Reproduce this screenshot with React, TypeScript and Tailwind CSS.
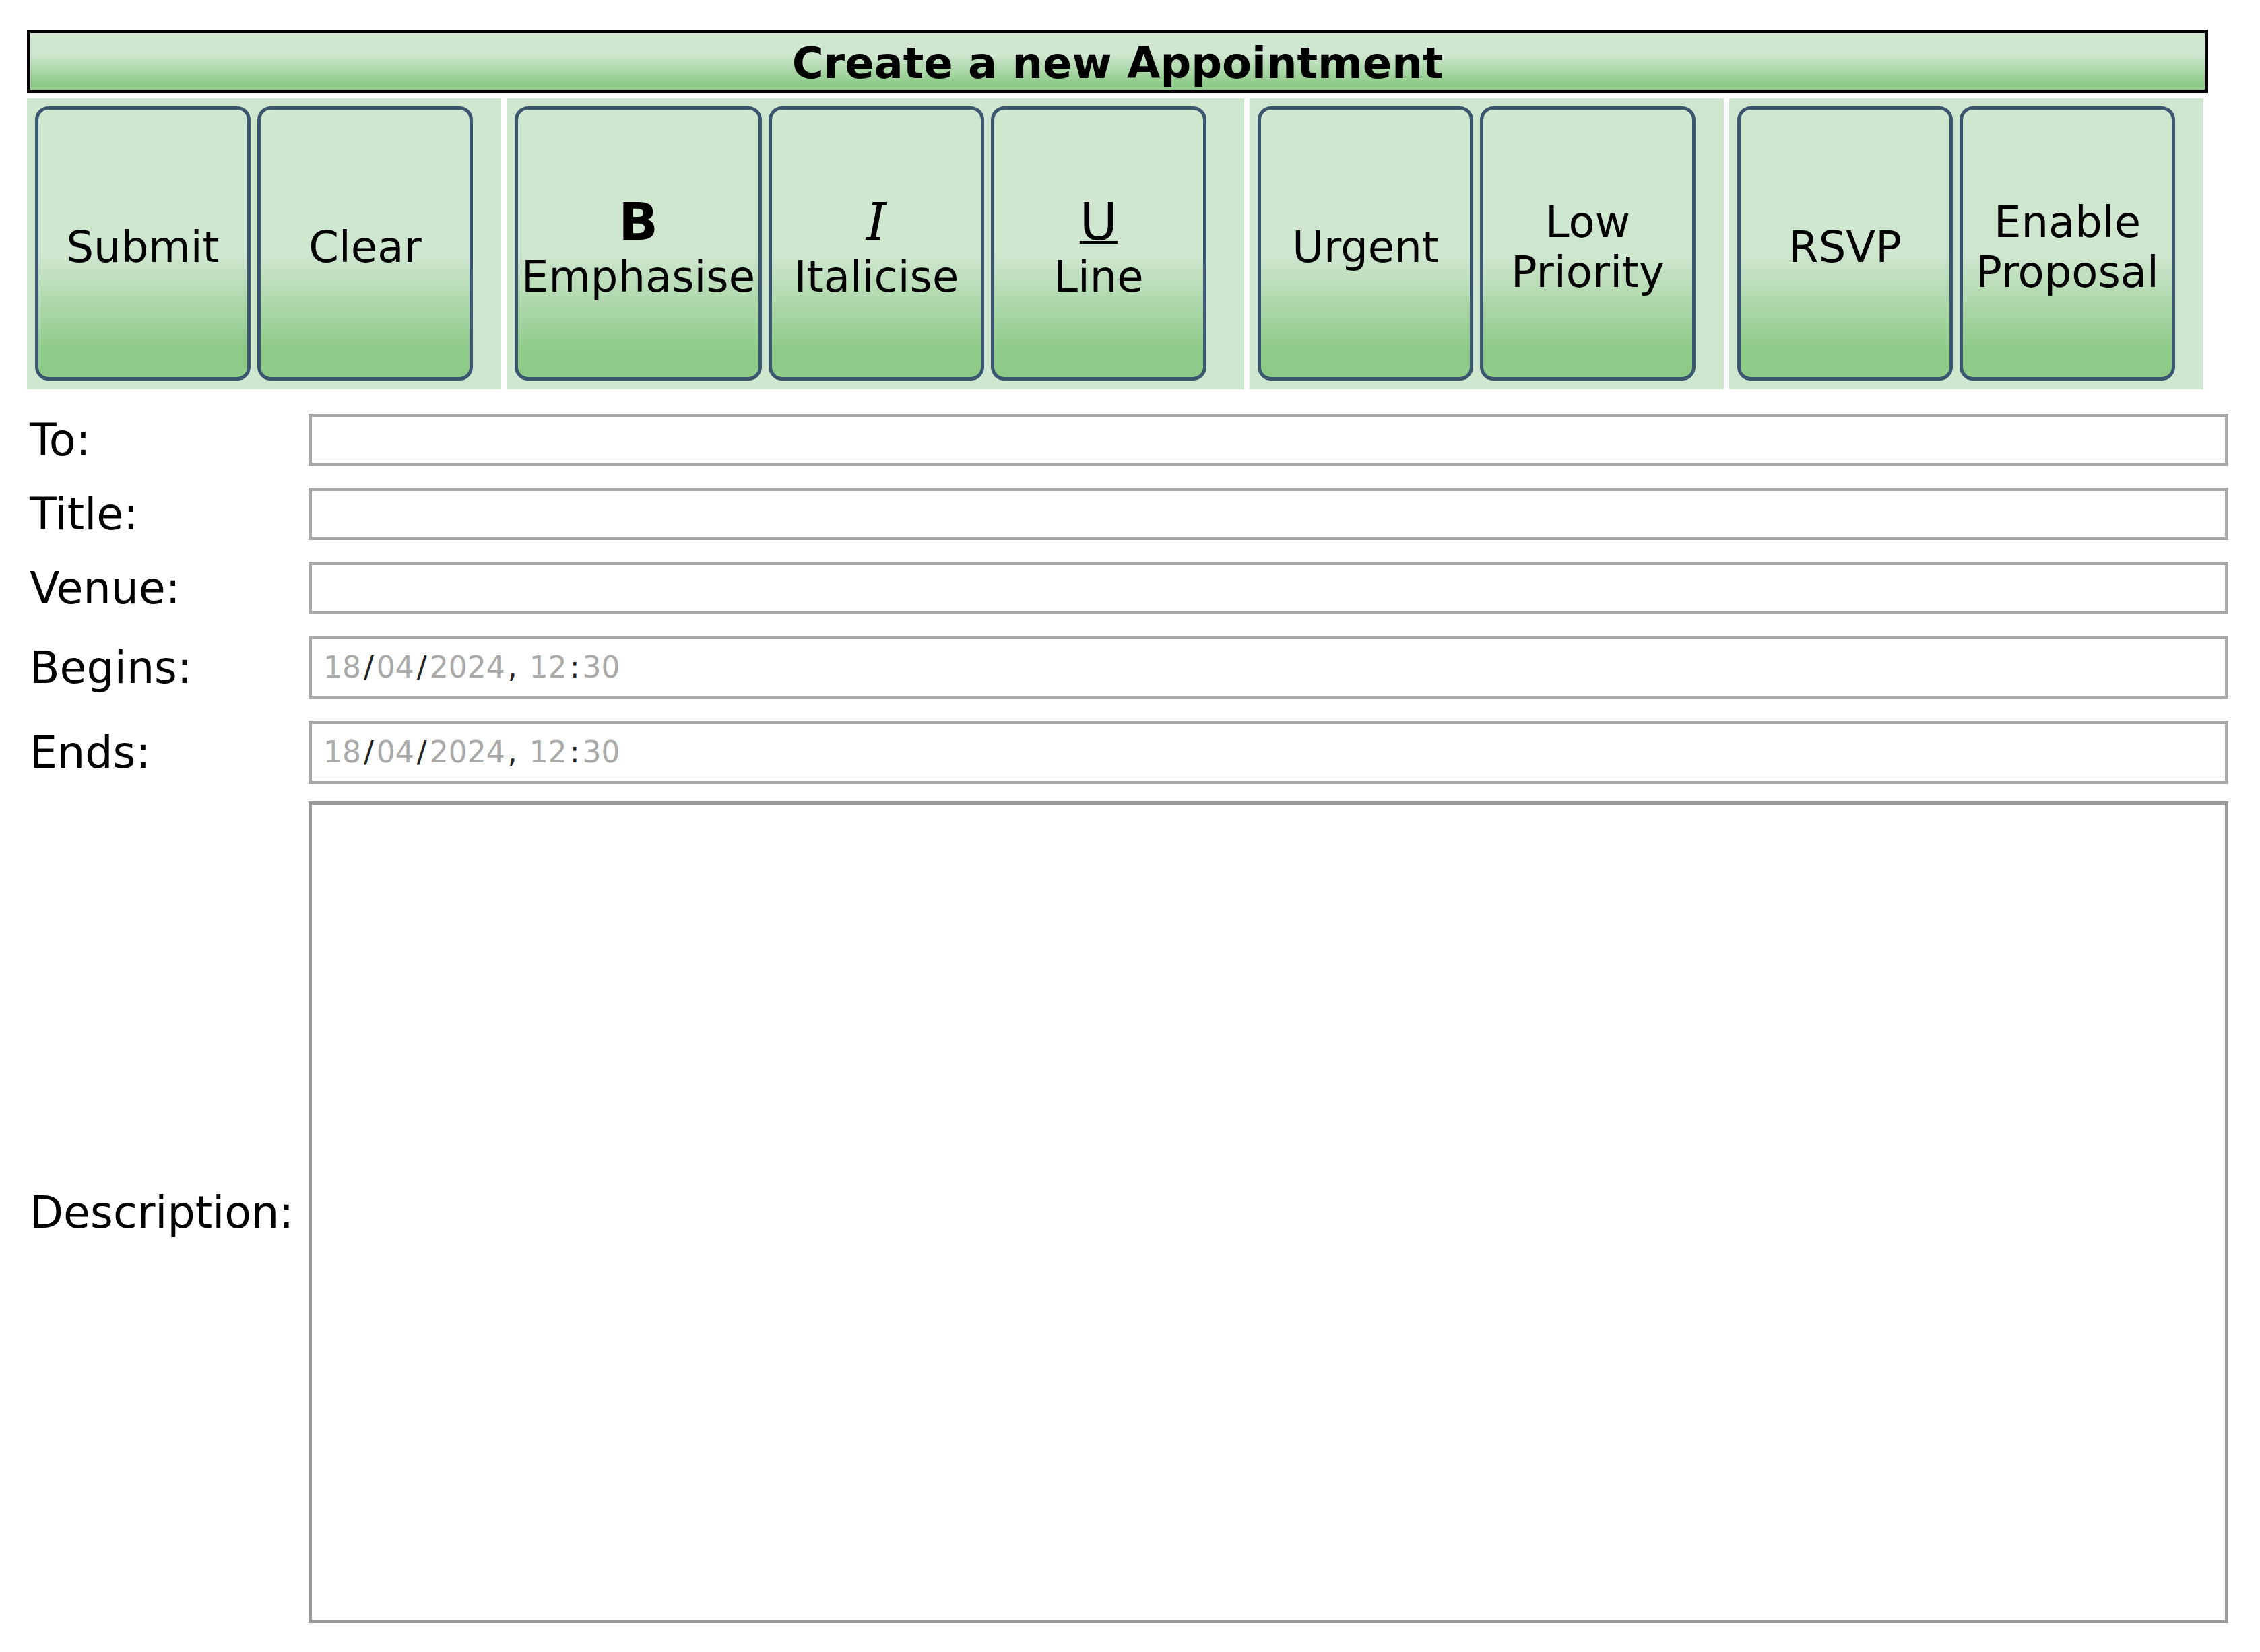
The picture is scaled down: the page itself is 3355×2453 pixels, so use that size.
import React from 'react';

type Btn = { id: string; top?: React.ReactNode; label: React.ReactNode };

const groups: { id: string; width: string; buttons: Btn[] }[] = [
  {
    id: 'actions',
    width: 'w-[704px]',
    buttons: [
      { id: 'submit', label: 'Submit' },
      { id: 'clear', label: 'Clear' },
    ],
  },
  {
    id: 'format',
    width: 'w-[1095px]',
    buttons: [
      { id: 'bold', top: <span className="font-bold">B</span>, label: 'Emphasise' },
      { id: 'italic', top: <i className="font-['DejaVu_Serif',serif]">I</i>, label: 'Italicise' },
      { id: 'underline', top: <u className="decoration-[4px]">U</u>, label: 'Line' },
    ],
  },
  {
    id: 'priority',
    width: 'w-[704px]',
    buttons: [
      { id: 'urgent', label: 'Urgent' },
      { id: 'low', label: <>Low<br />Priority</> },
    ],
  },
  {
    id: 'extras',
    width: 'w-[704px]',
    buttons: [
      { id: 'rsvp', label: 'RSVP' },
      { id: 'proposal', label: <>Enable<br />Proposal</> },
    ],
  },
];

const ToolButton: React.FC<{ btn: Btn }> = ({ btn }) => (
  <button
    type="button"
    className="flex h-[407px] min-w-[320px] flex-col items-center justify-center rounded-[20px] border-[5px] border-[#3b5670] bg-[linear-gradient(180deg,#cfe6cf_54%,#8ecb88_90%)] px-[5px] pt-[10px] text-center text-[64px] leading-[normal] text-black"
  >
    {btn.top && <span className="text-[77px] leading-[normal]">{btn.top}</span>}
    <span>{btn.label}</span>
  </button>
);

const DateValue: React.FC = () => (
  <div className="flex h-[94px] w-[2850px] items-center border-[5px] border-[#a8a8a8] bg-white pl-[13px] text-[44px] leading-none">
    <span className="px-[4px] text-[#a9a9a9]">18</span>
    <span className="text-[#222]">/</span>
    <span className="px-[4px] text-[#a9a9a9]">04</span>
    <span className="text-[#222]">/</span>
    <span className="px-[4px] text-[#a9a9a9]">2024</span>
    <span className="whitespace-pre text-[#222]">, </span>
    <span className="px-[4px] text-[#a9a9a9]">12</span>
    <span className="text-[#222]">:</span>
    <span className="px-[4px] text-[#a9a9a9]">30</span>
  </div>
);

const TextBox: React.FC = () => (
  <input type="text" className="h-[78px] w-[2850px] border-[5px] border-[#a8a8a8] bg-white px-[15px] text-[44px] outline-none" />
);

const Row: React.FC<{ label: string; className?: string; children: React.ReactNode }> = ({ label, className, children }) => (
  <div className={`flex items-center ${className ?? ''}`}>
    <label className="w-[418px] pl-[4px] text-[65px] leading-[normal] text-black">{label}</label>
    {children}
  </div>
);

export default function App() {
  return (
    <div className="min-h-screen w-[3355px] bg-white pl-[40px] pt-[44px] font-['DejaVu_Sans',sans-serif] text-black">
      <div className="flex h-[94px] w-[3238px] items-center justify-center border-[5px] border-black bg-[linear-gradient(180deg,#cfe6cf_38%,#8ecb88_90%)] pt-[6px]">
        <h1 className="text-[64px] font-bold leading-[normal]">Create a new Appointment</h1>
      </div>

      <div className="mt-[8px] flex gap-[8px]">
        {groups.map((g) => (
          <div key={g.id} className={`${g.width} flex h-[432px] items-start gap-[10px] bg-[#cfe6cf] p-[12px]`}>
            {g.buttons.map((b) => (
              <ToolButton key={b.id} btn={b} />
            ))}
          </div>
        ))}
      </div>

      <form className="mt-[36px] flex flex-col">
        <Row label="To:">
          <TextBox />
        </Row>
        <Row label="Title:" className="mt-[32px]">
          <TextBox />
        </Row>
        <Row label="Venue:" className="mt-[32px]">
          <TextBox />
        </Row>
        <Row label="Begins:" className="mt-[32px]">
          <DateValue />
        </Row>
        <Row label="Ends:" className="mt-[32px]">
          <DateValue />
        </Row>
        <Row label="Description:" className="mt-[26px]">
          <textarea className="h-[1220px] w-[2850px] resize-none border-[5px] border-[#999999] bg-white outline-none" />
        </Row>
      </form>
    </div>
  );
}
